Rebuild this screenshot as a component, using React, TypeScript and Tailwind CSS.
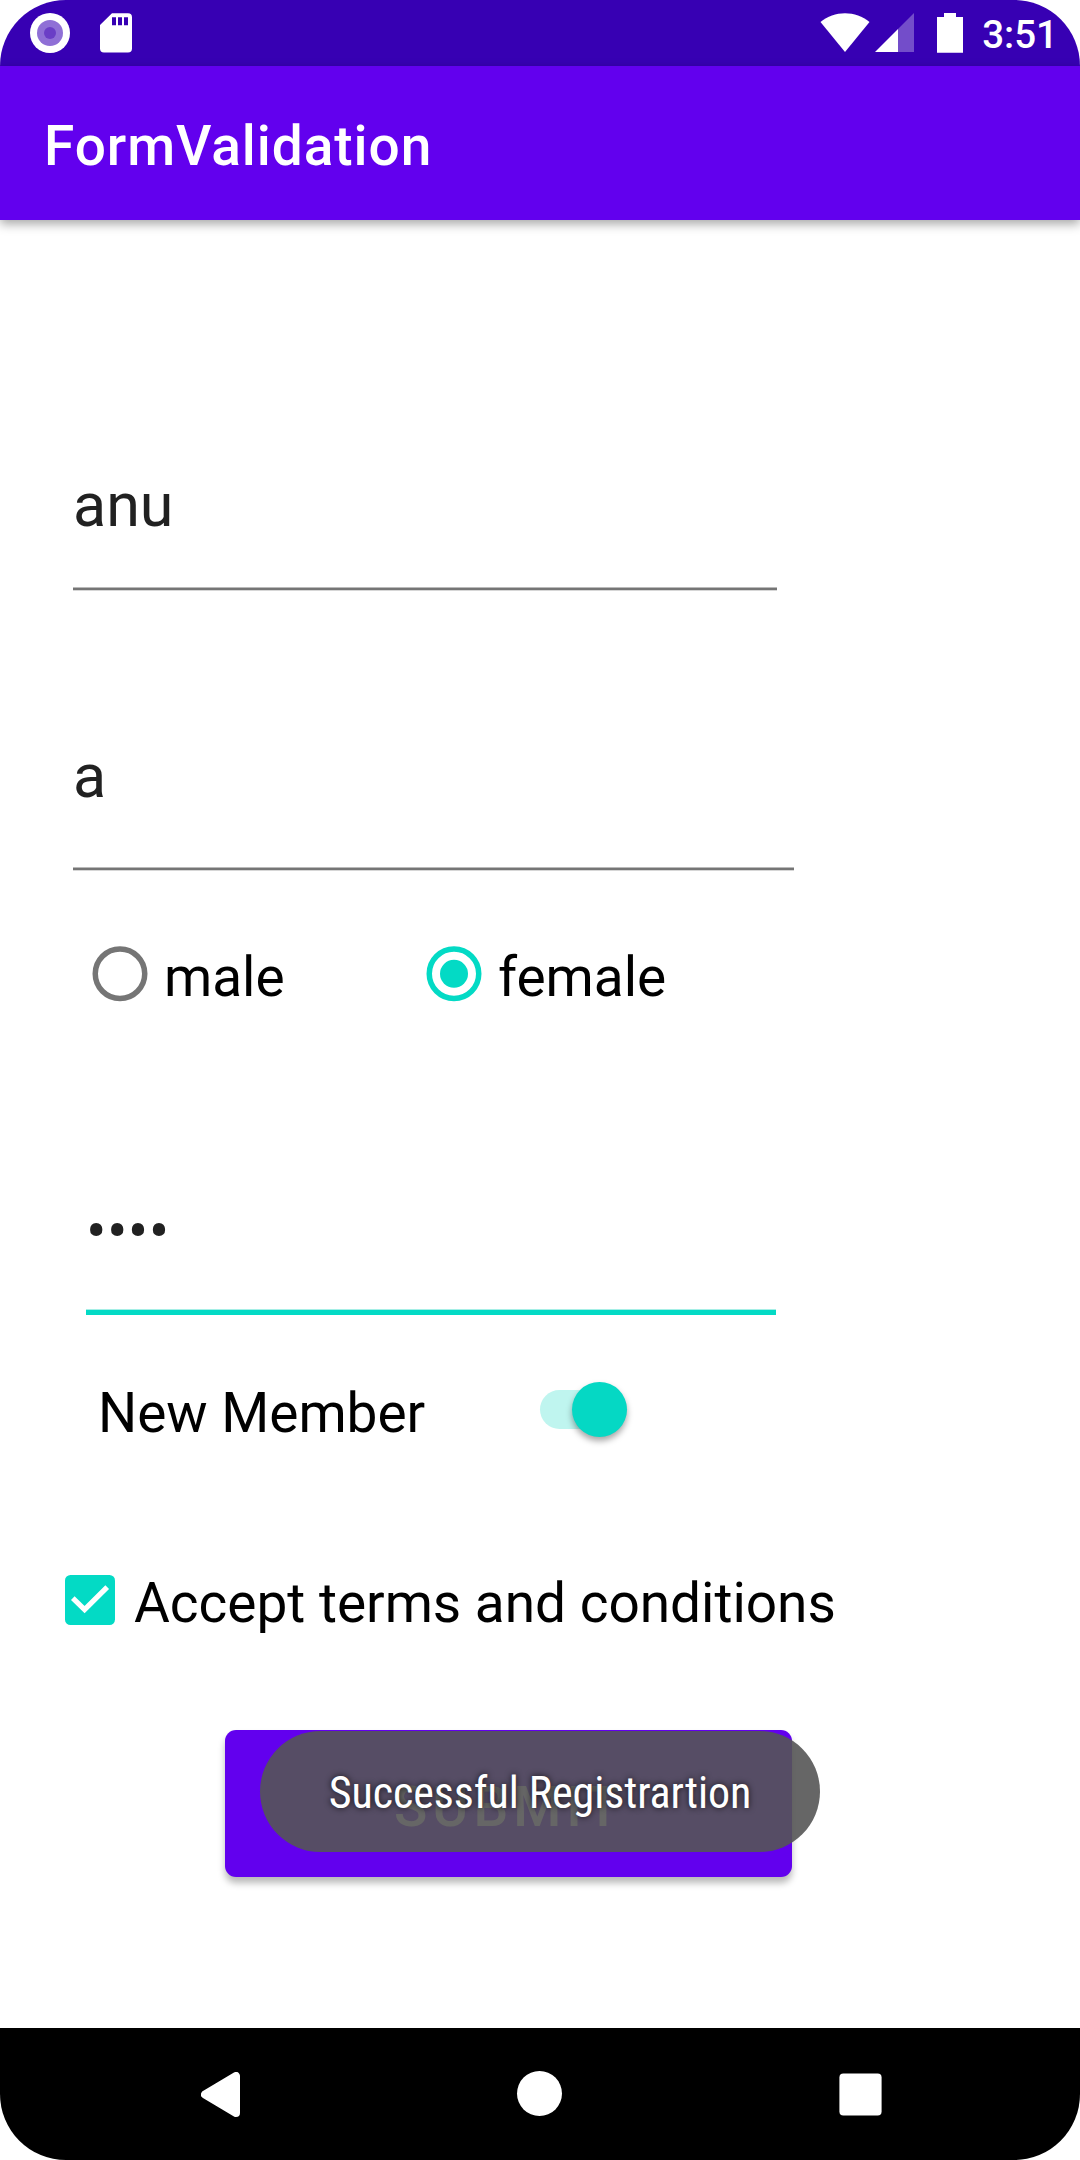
import type { ReactNode } from "react";

function StatusBar() {
  return (
    <div className="flex h-[66px] items-start justify-between bg-[#3700b3] text-white">
      <div className="flex items-start pt-[13px] pl-[30px]">
        <svg width="40" height="40" viewBox="0 0 40 40" aria-hidden="true">
          <circle cx="20" cy="20" r="20" fill="#fff" />
          <circle cx="20" cy="20" r="13" fill="#8f6fd6" />
          <circle cx="20" cy="20" r="6" fill="#6a3ec6" />
        </svg>
        <svg className="ml-[30px]" width="32" height="40" viewBox="0 0 32 40" aria-hidden="true">
          <path
            fill="#fff"
            fillRule="evenodd"
            d="M12 0.3H28a4 4 0 0 1 4 4V35.500a4 4 0 0 1-4 4H4a4 4 0 0 1-4-4V12ZM12 4.300v8h4v-8ZM18 4.300v8h4v-8ZM24 4.300v8h4v-8Z"
          />
        </svg>
      </div>
      <div className="flex items-start pr-[22px]">
        <svg className="mt-[13px]" width="50" height="40" viewBox="0 0 50 40" aria-hidden="true">
          <path fill="#fff" d="M0.500 9C14-2.800 36-2.800 49.500 9L25 39Z" />
        </svg>
        <svg className="mt-[13px] ml-[5px]" width="39" height="39" viewBox="0 0 39 39" aria-hidden="true">
          <path fill="#fff" fillOpacity="0.3" d="M39 0V39H23V16Z" />
          <path fill="#fff" d="M0 39L23 16V39Z" />
        </svg>
        <svg className="mt-[13px] ml-[23px]" width="26" height="40" viewBox="0 0 26 40" aria-hidden="true">
          <path fill="#fff" d="M7 0H19V4H26V39.700H0V4H7Z" />
        </svg>
        <span className="mt-[12px] ml-[19px] text-[38.500px] leading-[46px] font-medium">3:51</span>
      </div>
    </div>
  );
}

function TextField({ value, className, textClassName }: { value: string; className: string; textClassName: string }) {
  return (
    <div className={className}>
      <div className={`text-[61px] leading-[70px] text-[#212121] ${textClassName}`}>{value}</div>
      <div className="h-1 border-t border-b border-t-[#bababa] border-b-[#d6d6d6] bg-[#757575]" />
    </div>
  );
}

function Label({ children, className = "" }: { children: ReactNode; className?: string }) {
  return (
    <span className={`pt-[6px] text-[55px] leading-[64px] tracking-[-0.03px] whitespace-nowrap text-black ${className}`}>
      {children}
    </span>
  );
}

function Radio({ label, checked, className }: { label: string; checked: boolean; className: string }) {
  const color = checked ? "#03dac5" : "#757575";
  return (
    <div className={`flex items-center ${className}`} role="radio" aria-checked={checked}>
      <svg className="shrink-0" width="56" height="56" viewBox="0 0 56 56" aria-hidden="true">
        <circle cx="28" cy="27.800" r="24.750" fill="none" stroke={color} strokeWidth="5.500" />
        {checked && <circle cx="28" cy="27.800" r="14" fill={color} />}
      </svg>
      <Label className="ml-4">{label}</Label>
    </div>
  );
}

function NavigationBar() {
  return (
    <div className="flex h-[132px] items-start bg-black">
      <svg className="mt-[44px] ml-[201px]" width="39" height="45" viewBox="0 0 39 45" aria-hidden="true">
        <path d="M4 22.500L35 4V41Z" fill="#fff" stroke="#fff" strokeWidth="8" strokeLinejoin="round" />
      </svg>
      <div className="mt-[43px] ml-[277px] size-[45px] rounded-full bg-white" />
      <svg className="mt-[45px] ml-[277px]" width="43" height="43" viewBox="0 0 43 43" aria-hidden="true">
        <rect x="0.400" y="0.400" width="42.200" height="42.200" rx="4" fill="#fff" />
      </svg>
    </div>
  );
}

export default function App() {
  return (
    <div className="bg-white">
      <div className="flex h-[2160px] w-[1080px] flex-col overflow-hidden rounded-[66px] bg-white font-[Roboto,sans-serif]">
        <StatusBar />
        <header className="flex h-[154px] items-center bg-[#6200ee] pt-[6px] pl-11 shadow-[0_4px_10px_rgba(0,0,0,0.35)]">
          <h1 className="text-[55px] leading-[64px] font-medium tracking-[0.94px] text-white">FormValidation</h1>
        </header>
        <main className="flex h-[1808px] flex-col items-start">
          <TextField value="anu" className="mt-[250px] ml-[73px] w-[704px]" textClassName="h-[117px]" />
          <TextField value="a" className="mt-[150px] ml-[73px] w-[721px]" textClassName="h-[126px]" />
          <div className="mt-[71px] flex h-16 items-center" role="radiogroup">
            <Radio label="male" checked={false} className="ml-[92px] w-[334px]" />
            <Radio label="female" checked className="" />
          </div>
          <div className="mt-[190px] ml-[86px] w-[690px]">
            <div className="h-[113px] text-[61px] leading-[70px] tracking-[0.3px] text-[#212121]">••••</div>
            <div className="h-[6px] border-t border-[#a5efe6] bg-[#03dac5]" />
          </div>
          <div className="mt-[63px] ml-[98px] flex h-16 items-center">
            <Label className="w-[442px]">New Member</Label>
            <div className="mb-px flex h-[39px] w-[87px] items-center justify-end rounded-full bg-[#bff5ef]" role="switch" aria-checked="true">
              <div className="size-[55px] shrink-0 rounded-full bg-[#05d8c4] shadow-[0_4px_6px_rgba(0,0,0,0.35)]" />
            </div>
          </div>
          <div className="mt-[126px] ml-[65px] flex h-16 items-center">
            <svg width="50" height="50" viewBox="0 0 50 50" role="checkbox" aria-checked="true">
              <rect width="50" height="50" rx="5.500" fill="#03dac5" />
              <path d="M7.800 23.200L19.600 34.600L42.200 12.200" fill="none" stroke="#fff" strokeWidth="5.200" />
            </svg>
            <Label className="ml-[19px]">Accept terms and conditions</Label>
          </div>
          <div className="relative mt-[98px] ml-[225px]">
            <button className="flex h-[147px] w-[567px] items-center rounded-[11px] bg-[#6200ee] pt-[6px] pl-[169px] text-[55px] leading-[64px] font-medium tracking-[0.092em] text-white shadow-[0_6px_7px_rgba(0,0,0,0.28)]">
              SUBMIT
            </button>
            <div className="absolute top-px left-[35px] flex h-[121px] w-[560px] items-center justify-center rounded-full bg-[#555555]/90 pt-[2px]">
              <span className="text-[44px] leading-[52px] tracking-[-0.08px] whitespace-nowrap text-white font-['Roboto_Condensed',Roboto,sans-serif] [font-stretch:75%] [text-shadow:0_0_6px_rgba(0,0,0,0.8)]">
                Successful Registrartion
              </span>
            </div>
          </div>
        </main>
        <NavigationBar />
      </div>
    </div>
  );
}
